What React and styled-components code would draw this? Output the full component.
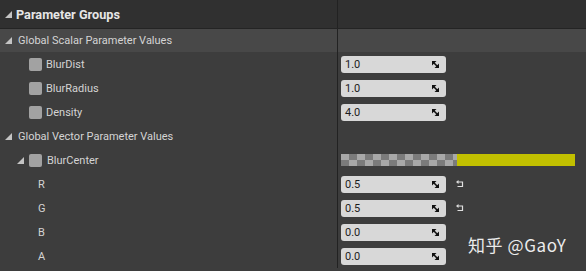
import React from 'react';
import styled, { createGlobalStyle } from 'styled-components';

const GlobalStyle = createGlobalStyle`
  html, body {
    margin: 0;
    padding: 0;
    background: #3d3d3d;
  }
  body {
    font-family: Roboto, "Liberation Sans", sans-serif;
    overflow: hidden;
  }
`

const Panel = styled.div`
    position: relative;
    width: 586px;
    height: 271px;
    background: #3d3d3d;
    overflow: hidden;
`

const Row = styled.div`
    display: grid;
    grid-template-columns: 338px 1fr;
    height: ${p => p.h || 24}px;
    background: ${p => p.bg || 'transparent'};
    border-bottom: ${p => p.line ? '1px solid #242424' : 'none'};
`

const NameCell = styled.div`
    display: flex;
    align-items: center;
    gap: ${p => p.gap || 4}px;
    padding-left: ${p => p.indent}px;
    border-right: 1px solid #222;
    color: ${p => p.bold ? '#e6e6e6' : '#d4d4d4'};
    font-size: ${p => p.bold ? '12.7px' : '11px'};
    font-weight: ${p => p.bold ? 700 : 400};
    white-space: nowrap;
`

const ValueCell = styled.div`
    display: flex;
    align-items: center;
    gap: 10px;
    padding-left: 3px;
`

const Checkbox = styled.span`
    width: 13px;
    height: 13px;
    border-radius: 2px;
    background: #a2a2a2;
    flex-shrink: 0;
`

const Channel = styled.span`
    padding-left: 38px;
`

const NumberBox = styled.div`
    width: 105px;
    height: 17px;
    box-sizing: border-box;
    border-radius: 3px;
    background: #d8d8d8;
    display: flex;
    align-items: center;
    justify-content: space-between;
    padding: 0 7px 0 4px;
    color: #1c1c1c;
    font-size: 11px;
`

const ColorBar = styled.div`
    display: flex;
    width: 234px;
    height: 12px;
`

const Checker = styled.div`
    width: 116px;
    background: repeating-conic-gradient(#7b7b7b 0 25%, #a8a8a8 0 50%) 0 0 / 16px 12px;
`

const Swatch = styled.div`
    flex: 1;
    background: ${p => p.color};
`

const Watermark = styled.div`
    position: absolute;
    left: 468px;
    top: 232px;
    font-family: "Noto Sans CJK SC", sans-serif;
    font-size: 17px;
    letter-spacing: 0.6px;
    color: #ececec;
    white-space: nowrap;
`

const Arrow = () => (
    <svg width="7" height="7" viewBox="0 0 7 7" style={{ flexShrink: 0 }}>
        <polygon points="7,0 7,7 0,7" fill="#c4c4c4" />
    </svg>
)

const SpinIcon = () => (
    <svg width="7" height="7" viewBox="0 0 7 7">
        <polygon points="0,0 4.5,0 0,4.5" fill="#111" />
        <polygon points="7,2.5 7,7 2.5,7" fill="#111" />
        <line x1="1" y1="1" x2="6" y2="6" stroke="#111" strokeWidth="1.6" />
    </svg>
)

const ResetIcon = () => (
    <svg width="8" height="8" viewBox="0 0 8 8">
        <polyline points="2,2 6.5,2 6.5,6.5 1.5,6.5" fill="none" stroke="#e0e0e0" strokeWidth="1.2" />
        <polygon points="0,2 2.5,0 2.5,4" fill="#e0e0e0" />
    </svg>
)

function Num({ value, reset }) {
    return (
        <>
            <NumberBox>
                <span>{value}</span>
                <SpinIcon />
            </NumberBox>
            {reset && <ResetIcon />}
        </>
    )
}

const scalars = [
    { name: 'BlurDist', value: '1.0' },
    { name: 'BlurRadius', value: '1.0' },
    { name: 'Density', value: '4.0' },
]

const channels = [
    { name: 'R', value: '0.5', reset: true },
    { name: 'G', value: '0.5', reset: true },
    { name: 'B', value: '0.0' },
    { name: 'A', value: '0.0' },
]

export default function App() {
    return (
        <Panel>
            <GlobalStyle />
            <Row h={28} bg="#303030" line>
                <NameCell indent={5} bold>
                    <Arrow />
                    Parameter Groups
                </NameCell>
                <ValueCell />
            </Row>
            <Row h={23} bg="#484848">
                <NameCell indent={5} gap={6}>
                    <Arrow />
                    Global Scalar Parameter Values
                </NameCell>
                <ValueCell />
            </Row>
            {scalars.map(s => (
                <Row key={s.name}>
                    <NameCell indent={29}>
                        <Checkbox />
                        {s.name}
                    </NameCell>
                    <ValueCell>
                        <Num value={s.value} />
                    </ValueCell>
                </Row>
            ))}
            <Row>
                <NameCell indent={5} gap={6}>
                    <Arrow />
                    Global Vector Parameter Values
                </NameCell>
                <ValueCell />
            </Row>
            <Row>
                <NameCell indent={17} gap={5}>
                    <Arrow />
                    <Checkbox />
                    BlurCenter
                </NameCell>
                <ValueCell>
                    <ColorBar>
                        <Checker />
                        <Swatch color="#c2c000" />
                    </ColorBar>
                </ValueCell>
            </Row>
            {channels.map(c => (
                <Row key={c.name}>
                    <NameCell indent={0}>
                        <Channel>{c.name}</Channel>
                    </NameCell>
                    <ValueCell>
                        <Num value={c.value} reset={c.reset} />
                    </ValueCell>
                </Row>
            ))}
            <Watermark>知乎 @GaoY</Watermark>
        </Panel>
    )
}
